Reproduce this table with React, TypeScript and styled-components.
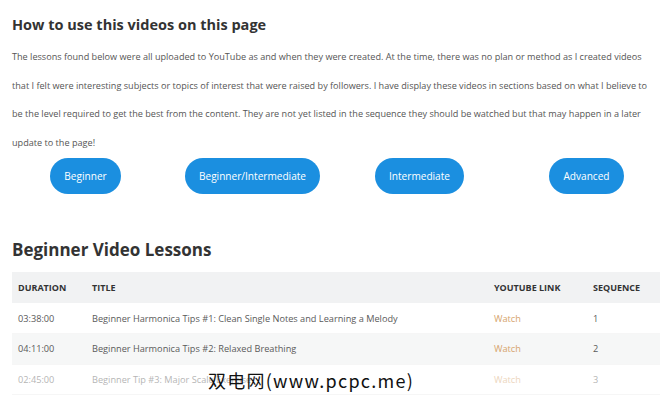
import React from "react";
import styled, { createGlobalStyle } from "styled-components";

const Global = createGlobalStyle`
  html, body { margin: 0; padding: 0; background: #fff; }
  body { font-family: "Open Sans", "Noto Sans", sans-serif; color: #555; }
  * { box-sizing: border-box; }
`;

const Page = styled.div`
  position: relative;
  width: 670px;
  height: 403px;
  overflow: hidden;
  padding: 0 8px 0 12px;
`;

const Title = styled.h2`
  margin: 15px 0 0;
  font-size: 14.5px;
  font-weight: 700;
  color: #333;
  line-height: 20px;
`;

const Intro = styled.p`
  margin: 8px 7px 0 0;
  font-size: 9.12px;
  line-height: 28.5px;
  color: #555;
`;

const ButtonRow = styled.div`
  display: grid;
  grid-template-columns: repeat(4, 167px);
  margin: 1px 0 0 -10px;
`;

const Cell = styled.div`
  display: flex;
  justify-content: center;
`;

const LevelButton = styled.a`
  display: inline-flex;
  align-items: center;
  height: 36px;
  padding: 0 14px;
  border-radius: 18px;
  background: #1b8fe0;
  color: #fff;
  font-size: 10.1px;
  text-decoration: none;
`;

const SectionTitle = styled.h2`
  margin: 43px 0 0;
  font-size: 17px;
  font-weight: 700;
  color: #333;
  line-height: 26px;
`;

const Table = styled.table`
  margin-top: 9px;
  width: 648px;
  border-collapse: collapse;
  font-size: 9.2px;
`;

const Th = styled.th`
  background: #f1f2f3;
  text-align: left;
  font-weight: 700;
  color: #333;
  height: 31px;
  padding: 0 6px;
  font-size: 9px;
`;

const Row = styled.tr<{ $alt?: boolean; $fade?: boolean }>`
  background: ${(p) => (p.$alt ? "#f6f7f7" : "#fff")};
  opacity: ${(p) => (p.$fade ? 0.45 : 1)};
  border-bottom: 1px solid #f6f6f6;
`;

const Td = styled.td`
  height: 30.5px;
  padding: 0 6px;
  color: #5a5a5a;
`;

const WatchLink = styled.a`
  color: #d6a46c;
  text-decoration: none;
`;

const Watermark = styled.div`
  position: absolute;
  left: 208px;
  top: 367px;
  font-family: "Noto Sans CJK SC", sans-serif;
  font-size: 18px;
  color: #111;
  letter-spacing: 1.25px;
  white-space: nowrap;
`;

const levels = ["Beginner", "Beginner/Intermediate", "Intermediate", "Advanced"];

const rows = [
  { d: "03:38:00", t: "Beginner Harmonica Tips #1: Clean Single Notes and Learning a Melody", s: "1" },
  { d: "04:11:00", t: "Beginner Harmonica Tips #2: Relaxed Breathing", s: "2" },
  { d: "02:45:00", t: "Beginner Tip #3: Major Scale Exercise", s: "3" },
];

export default function App() {
  return (
    <Page>
      <Global />
      <Title>How to use this videos on this page</Title>
      <Intro>
        The lessons found below were all uploaded to YouTube as and when they were created. At the time, there was no plan or method as I created videos that I felt were interesting subjects or topics of interest that were raised by followers. I have display these videos in sections based on what I believe to be the level required to get the best from the content. They are not yet listed in the sequence they should be watched but that may happen in a later update to the page!
      </Intro>
      <ButtonRow>
        {levels.map((l) => (
          <Cell key={l}>
            <LevelButton>{l}</LevelButton>
          </Cell>
        ))}
      </ButtonRow>
      <SectionTitle>Beginner Video Lessons</SectionTitle>
      <Table>
        <colgroup>
          <col style={{ width: 74 }} />
          <col style={{ width: 402 }} />
          <col style={{ width: 99 }} />
          <col />
        </colgroup>
        <thead>
          <tr>
            <Th>DURATION</Th>
            <Th>TITLE</Th>
            <Th>YOUTUBE LINK</Th>
            <Th>SEQUENCE</Th>
          </tr>
        </thead>
        <tbody>
          {rows.map((r, i) => (
            <Row key={r.d} $alt={i % 2 === 1} $fade={i === 2}>
              <Td>{r.d}</Td>
              <Td>{r.t}</Td>
              <Td>
                <WatchLink>Watch</WatchLink>
              </Td>
              <Td>{r.s}</Td>
            </Row>
          ))}
        </tbody>
      </Table>
      <Watermark>双电网(www.pcpc.me)</Watermark>
    </Page>
  );
}
